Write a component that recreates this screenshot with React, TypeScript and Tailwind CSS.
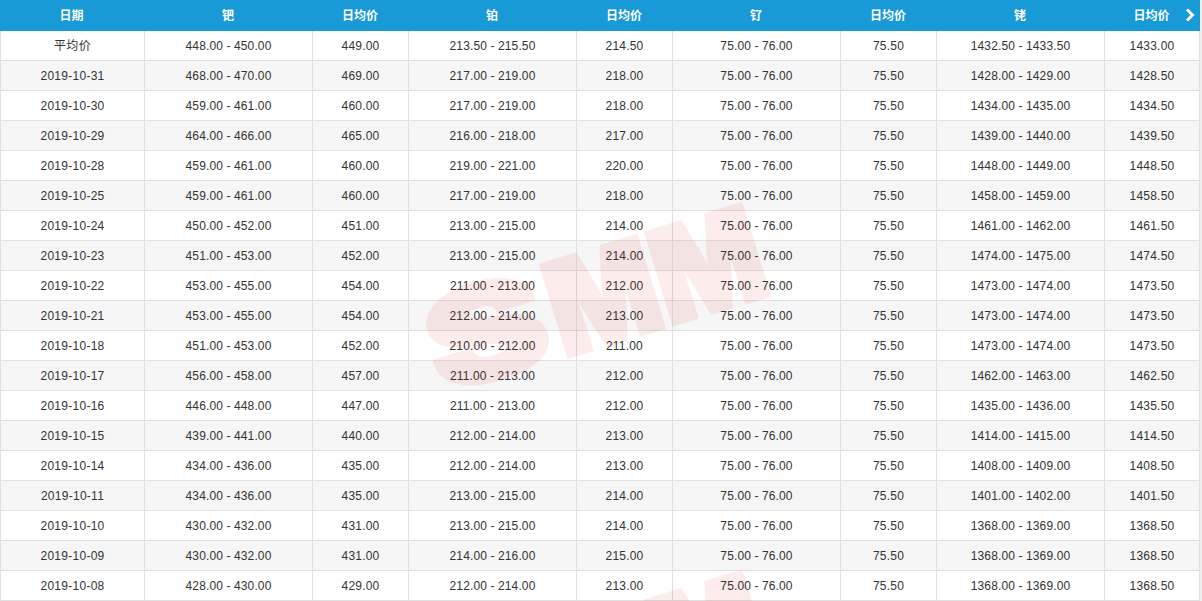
const rows: string[][] = [
  ["平均价","448.00 - 450.00","449.00","213.50 - 215.50","214.50","75.00 - 76.00","75.50","1432.50 - 1433.50","1433.00"],
  ["2019-10-31","468.00 - 470.00","469.00","217.00 - 219.00","218.00","75.00 - 76.00","75.50","1428.00 - 1429.00","1428.50"],
  ["2019-10-30","459.00 - 461.00","460.00","217.00 - 219.00","218.00","75.00 - 76.00","75.50","1434.00 - 1435.00","1434.50"],
  ["2019-10-29","464.00 - 466.00","465.00","216.00 - 218.00","217.00","75.00 - 76.00","75.50","1439.00 - 1440.00","1439.50"],
  ["2019-10-28","459.00 - 461.00","460.00","219.00 - 221.00","220.00","75.00 - 76.00","75.50","1448.00 - 1449.00","1448.50"],
  ["2019-10-25","459.00 - 461.00","460.00","217.00 - 219.00","218.00","75.00 - 76.00","75.50","1458.00 - 1459.00","1458.50"],
  ["2019-10-24","450.00 - 452.00","451.00","213.00 - 215.00","214.00","75.00 - 76.00","75.50","1461.00 - 1462.00","1461.50"],
  ["2019-10-23","451.00 - 453.00","452.00","213.00 - 215.00","214.00","75.00 - 76.00","75.50","1474.00 - 1475.00","1474.50"],
  ["2019-10-22","453.00 - 455.00","454.00","211.00 - 213.00","212.00","75.00 - 76.00","75.50","1473.00 - 1474.00","1473.50"],
  ["2019-10-21","453.00 - 455.00","454.00","212.00 - 214.00","213.00","75.00 - 76.00","75.50","1473.00 - 1474.00","1473.50"],
  ["2019-10-18","451.00 - 453.00","452.00","210.00 - 212.00","211.00","75.00 - 76.00","75.50","1473.00 - 1474.00","1473.50"],
  ["2019-10-17","456.00 - 458.00","457.00","211.00 - 213.00","212.00","75.00 - 76.00","75.50","1462.00 - 1463.00","1462.50"],
  ["2019-10-16","446.00 - 448.00","447.00","211.00 - 213.00","212.00","75.00 - 76.00","75.50","1435.00 - 1436.00","1435.50"],
  ["2019-10-15","439.00 - 441.00","440.00","212.00 - 214.00","213.00","75.00 - 76.00","75.50","1414.00 - 1415.00","1414.50"],
  ["2019-10-14","434.00 - 436.00","435.00","212.00 - 214.00","213.00","75.00 - 76.00","75.50","1408.00 - 1409.00","1408.50"],
  ["2019-10-11","434.00 - 436.00","435.00","213.00 - 215.00","214.00","75.00 - 76.00","75.50","1401.00 - 1402.00","1401.50"],
  ["2019-10-10","430.00 - 432.00","431.00","213.00 - 215.00","214.00","75.00 - 76.00","75.50","1368.00 - 1369.00","1368.50"],
  ["2019-10-09","430.00 - 432.00","431.00","214.00 - 216.00","215.00","75.00 - 76.00","75.50","1368.00 - 1369.00","1368.50"],
  ["2019-10-08","428.00 - 430.00","429.00","212.00 - 214.00","213.00","75.00 - 76.00","75.50","1368.00 - 1369.00","1368.50"],
];

const headers = ["日期","钯","日均价","铂","日均价","钌","日均价","铑","日均价"];
const widths = ["w-[145px]","w-[168px]","w-[96px]","w-[168px]","w-[96px]","w-[168px]","w-[96px]","w-[168px]","w-[95px]"];
const tracking = ["tracking-[0.27px]","tracking-[0.12px]","tracking-[0.2px]","tracking-[0.12px]","tracking-[0.2px]","tracking-[0.12px]","tracking-[0.2px]","tracking-[0.12px]","tracking-[0.2px]"];

function Watermark({ top }: { top: string }) {
  return (
    <div
      className={`absolute left-[414px] ${top} w-[354px] flex -rotate-[17deg] text-[130px] leading-none font-black text-[#e60000] [-webkit-text-stroke:5px_#e60000] opacity-[0.07] pointer-events-none select-none`}
      style={{ fontFamily: "Inter, 'Liberation Sans', sans-serif" }}
    >
      <span className="w-[134px] shrink-0 text-center scale-x-[1.4]">S</span>
      <span className="w-[110px] shrink-0 flex justify-center scale-x-[0.88]">M</span>
      <span className="w-[110px] shrink-0 flex justify-center scale-x-[0.88]">M</span>
    </div>
  );
}

export default function App() {
  return (
    <div className="relative w-[1202px] h-[601px] overflow-hidden bg-[#eeeeee] font-['Liberation_Sans','Noto_Sans_CJK_SC',sans-serif] text-xs text-[#333333]">
      <div className="relative w-[1200px] h-[601px] overflow-hidden bg-white">
        <div className="flex h-[31px] bg-[#189ad6] text-white font-bold">
          {headers.map((h, i) => (
            <div key={i} className={`${widths[i]} shrink-0 flex items-center justify-center pr-[2px]`}>{h}</div>
          ))}
        </div>
        {rows.map((r, ri) => (
          <div key={ri} className={`flex h-[30px] border-b border-[#e0e0e0] ${ri % 2 ? "bg-[#f6f6f6]" : "bg-white"}`}>
            {r.map((c, ci) => (
              <div
                key={ci}
                className={`${widths[ci]} ${tracking[ci]} shrink-0 flex items-center justify-center border-r border-[#e0e0e0] ${ci === 0 ? "border-l" : ""}`}
              >
                {c}
              </div>
            ))}
          </div>
        ))}
        <Watermark top="top-[235px]" />
        <Watermark top="top-[603px]" />
        <svg className="absolute left-[1184px] top-[8px]" width="12" height="14" viewBox="0 0 12 14" fill="none">
          <path d="M3 1.5 L8.5 7 L3 12.5" stroke="white" strokeWidth="3" />
        </svg>
      </div>
    </div>
  );
}
